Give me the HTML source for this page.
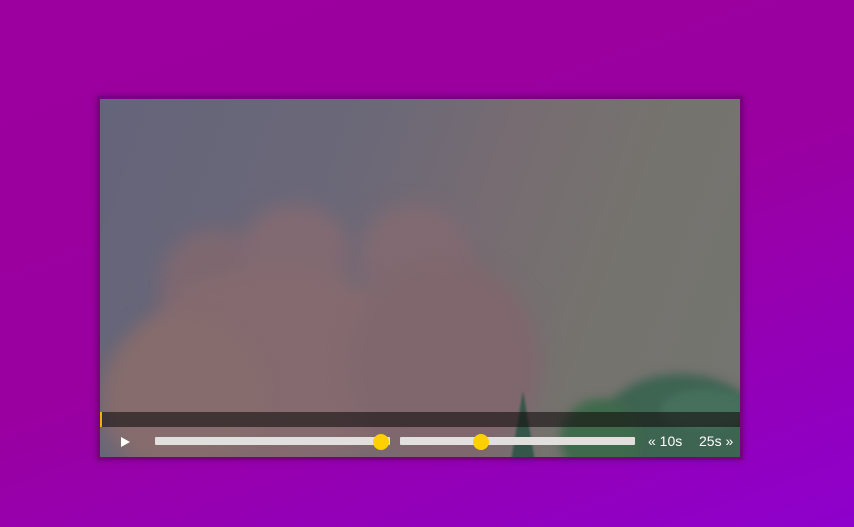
<!DOCTYPE html>
<html><head><meta charset="utf-8"><style>
html,body{margin:0;padding:0}
body{width:854px;height:527px;overflow:hidden;position:relative;
background:linear-gradient(160deg,#9c009e 0%,#9a00a0 50%,#8e00cc 100%);font-family:"Liberation Sans",sans-serif}
.box{position:absolute;left:97px;top:96px;width:646px;height:364px;background:#7a0080;box-shadow:0 0 6px rgba(80,0,90,.6)}
.v{position:absolute;left:100px;top:99px;width:640px;height:358px;overflow:hidden;
background:linear-gradient(110deg,#64647a 0%,#6b6878 35%,#766c72 55%,#75736e 75%,#747470 100%)}
.blob{position:absolute;border-radius:50%;filter:blur(10px)}
.bar{position:absolute;left:0;top:313px;width:640px;height:15px;background:rgba(20,15,15,.6)}
.ind{position:absolute;left:0;top:313px;width:2px;height:15px;background:#f0b000}
.tr{position:absolute;left:0;top:338px;width:8px;height:0;border-left:9px solid #fff;border-top:5px solid transparent;border-bottom:5px solid transparent;margin-left:21px}
.sl{position:absolute;top:338px;height:8px;background:#e2e0df;border-radius:1px}
.th{position:absolute;top:335px;width:16px;height:16px;border-radius:50%;background:#ffd000}
.t{position:absolute;top:334px;color:#fff;font-size:14px}
</style></head><body>
<div class="box"></div>
<div class="v">
 <div class="blob" style="left:60px;top:130px;width:110px;height:110px;background:#7e6870"></div>
 <div class="blob" style="left:140px;top:105px;width:110px;height:100px;background:#826a72"></div>
 <div class="blob" style="left:260px;top:105px;width:110px;height:110px;background:#826a72"></div>
 <div class="blob" style="left:30px;top:170px;width:300px;height:200px;background:#856b6f"></div>
 <div class="blob" style="left:250px;top:160px;width:190px;height:210px;background:#7f676d"></div>
 <div class="blob" style="left:0px;top:220px;width:160px;height:160px;background:#866c6c"></div>
 <div class="blob" style="left:500px;top:275px;width:160px;height:110px;background:#3e6452;filter:blur(5px)"></div>
 <div class="blob" style="left:460px;top:300px;width:80px;height:80px;background:#3f6a4c;filter:blur(5px)"></div>
 <div class="blob" style="left:560px;top:290px;width:90px;height:40px;background:#466f5c;filter:blur(4px)"></div>
 <div style="position:absolute;left:411px;top:292px;width:0;height:0;border-left:12px solid transparent;border-right:12px solid transparent;border-bottom:70px solid #35564a;filter:blur(1px)"></div>
 <div class="bar"></div><div class="ind"></div>
 <div class="tr"></div>
 <div class="sl" style="left:55px;width:235px"></div>
 <div class="th" style="left:273px"></div>
 <div class="sl" style="left:300px;width:235px"></div>
 <div class="th" style="left:373px"></div>
 <div class="t" style="left:548px">« 10s</div>
 <div class="t" style="left:599px">25s »</div>
</div>
</body></html>
